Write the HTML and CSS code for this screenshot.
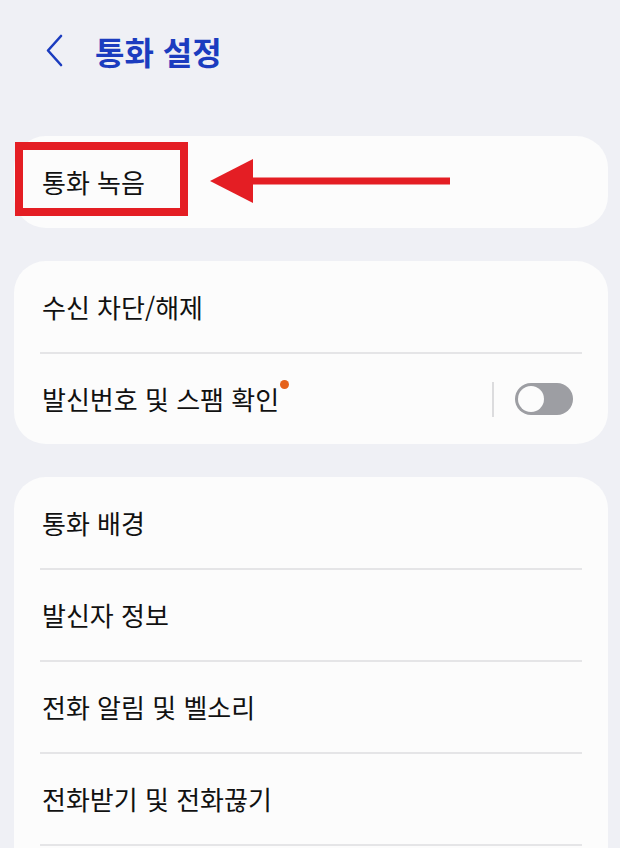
FILE: index.html
```html
<!DOCTYPE html>
<html lang="ko">
<head>
<meta charset="utf-8">
<link rel="stylesheet" href="styles.css">
</head>
<body>
<header class="header">
  <svg class="back" width="20" height="34" viewBox="0 0 20 34"><path d="M16 2 L3 16.5 L16 31" fill="none" stroke="#1b3cbf" stroke-width="2.6" stroke-linecap="round" stroke-linejoin="round"/></svg>
  <h1 class="title">통화 설정</h1>
</header>
<main class="list">
  <section class="card card-record">
    <div class="row"><span class="label">통화 녹음</span></div>
    <div class="mark-box"></div>
    <svg class="mark-arrow" width="242" height="46" viewBox="0 0 242 46"><polygon points="0,23 43,1 43,45" fill="#e41e24"/><rect x="42" y="19.5" width="198" height="7" fill="#e41e24"/></svg>
  </section>
  <section class="card card-pad">
    <div class="row"><span class="label">수신 차단/해제</span></div>
    <div class="divider"></div>
    <div class="row">
      <span class="label">발신번호 및 스팸 확인<span class="dot"></span></span>
      <div class="switch-wrap">
        <span class="vsep"></span>
        <span class="switch"><span class="knob"></span></span>
      </div>
    </div>
  </section>
  <section class="card card-last card-pad">
    <div class="row"><span class="label">통화 배경</span></div>
    <div class="divider"></div>
    <div class="row"><span class="label">발신자 정보</span></div>
    <div class="divider"></div>
    <div class="row"><span class="label">전화 알림 및 벨소리</span></div>
    <div class="divider"></div>
    <div class="row"><span class="label">전화받기 및 전화끊기</span></div>
    <div class="divider"></div>
    <div class="row"></div>
  </section>
</main>
</body>
</html>
```

FILE: styles.css
```css
html, body {
  margin: 0;
  padding: 0;
  background: #eff0f5;
  font-family: "Noto Sans CJK KR", "Noto Sans", sans-serif;
  color: #111;
  overflow: hidden;
  height: 848px;
}
.header {
  display: flex;
  align-items: center;
  height: 102px;
  padding-left: 45px;
  box-sizing: border-box;
}
.back {
  display: block;
}
.title {
  margin: 0 0 0 30px;
  font-size: 32px;
  font-weight: 700;
  color: #1b3cbf;
  line-height: 1;
}
.list {
  display: flex;
  flex-direction: column;
  gap: 33px;
  margin: 34px 12px 0 14px;
}
.card {
  background: #fcfcfc;
  border-radius: 32px;
  position: relative;
}
.card-pad {
  padding-top: 1px;
}
.card-last {
  border-radius: 32px 32px 0 0;
}
.row {
  height: 90px;
  display: flex;
  align-items: center;
  justify-content: space-between;
  padding: 0 35px 0 28px;
}
.card-record .row {
  height: 92px;
}
.label {
  font-size: 26px;
  line-height: 1;
  position: relative;
  white-space: nowrap;
}
.divider {
  height: 2px;
  background: #e5e5e7;
  margin: 0 26px;
}
.dot {
  position: absolute;
  top: -6px;
  right: -10px;
  width: 9px;
  height: 9px;
  border-radius: 50%;
  background: #e5611b;
}
.switch-wrap {
  display: flex;
  align-items: center;
  gap: 21px;
}
.vsep {
  width: 2px;
  height: 35px;
  background: #dcdcde;
}
.switch {
  width: 58px;
  height: 32px;
  border-radius: 16px;
  background: #9d9ea3;
  position: relative;
}
.knob {
  position: absolute;
  left: 3px;
  top: 3px;
  width: 26px;
  height: 26px;
  border-radius: 50%;
  background: #fcfcfc;
}
.mark-box {
  position: absolute;
  left: 1px;
  top: 6px;
  width: 173px;
  height: 74px;
  border: 8px solid #e41e24;
  box-sizing: border-box;
}
.mark-arrow {
  position: absolute;
  left: 196px;
  top: 22px;
}
```
